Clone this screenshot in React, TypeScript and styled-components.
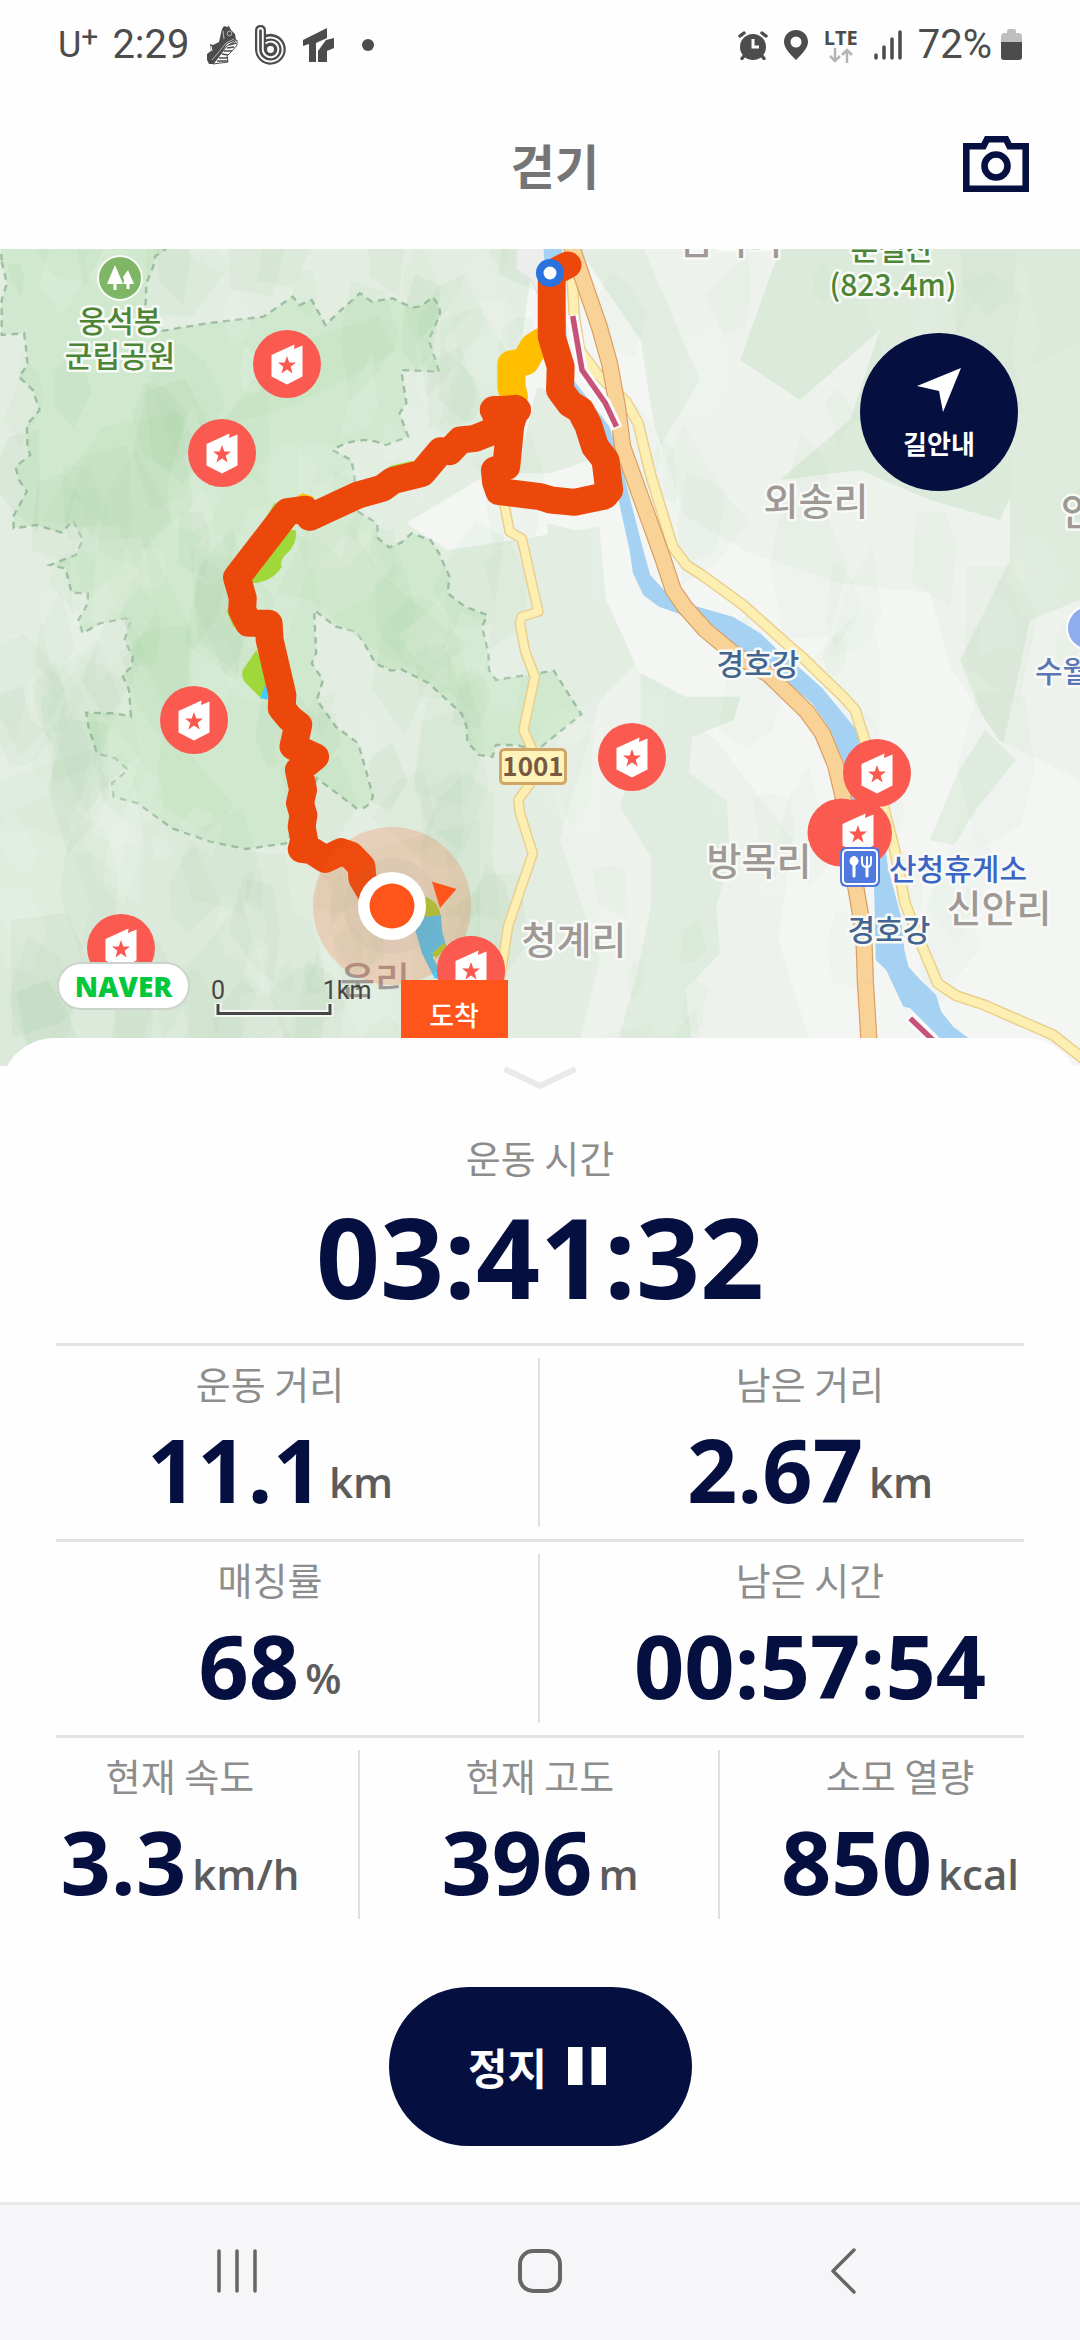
import React from "react";
import styled, { createGlobalStyle } from "styled-components";

const navy = "#051040";
const korean = `"Noto Sans CJK KR", "Noto Sans", sans-serif`;
const numeric = `"Open Sans", "Noto Sans", sans-serif`;

const GlobalStyle = createGlobalStyle`
  * { box-sizing: border-box; }
  body { margin: 0; background: #fefefe; font-family: ${korean}; }
  button { border: 0; padding: 0; background: none; color: inherit; font: inherit; cursor: pointer; }
`;

const Screen = styled.div`
  display: flex;
  flex-direction: column;
  min-height: 100vh;
  background: #fefefe;
`;

const StatusBar = styled.div`
  display: flex;
  justify-content: space-between;
  align-items: center;
  height: 90px;
  padding: 0 58px 0 58px;
  color: #4c4c4c;
  font-family: Roboto, sans-serif;
  font-size: 40px;
  line-height: 48px;
`;

const StatusGroup = styled.div<{ $gap: number }>`
  display: flex;
  align-items: center;
  gap: ${(p) => p.$gap}px;
`;

const Carrier = styled.span`
  display: flex;
  align-items: flex-start;
  font-size: 36px;
  line-height: 48px;
`;

const CarrierPlus = styled.span`
  font-size: 30px;
  line-height: 32px;
`;

const NetworkType = styled.span`
  display: flex;
  flex-direction: column;
  align-items: center;
  font-family: "Open Sans", sans-serif;
  font-size: 20px;
  font-weight: 700;
  line-height: 20px;
`;

const Header = styled.header`
  display: flex;
  align-items: center;
  height: 159px;
  padding: 0 40px 12px 140px;
`;

const Title = styled.h1`
  flex: 1;
  margin: 0;
  padding-left: 18px;
  text-align: center;
  color: #757575;
  font-size: 48px;
  font-weight: 700;
  line-height: 72px;
`;

const CameraButton = styled.button`
  display: flex;
  justify-content: center;
  width: 88px;
`;

const MapArea = styled.section`
  position: relative;
  height: 817px;
  overflow: hidden;
  background: #e6eee5;
`;

const MapCanvas = styled.svg`
  display: block;
  width: 100%;
  height: 100%;
`;

const GuideButton = styled.button`
  position: absolute;
  top: 84px;
  right: 62px;
  display: flex;
  flex-direction: column;
  align-items: center;
  gap: 10px;
  width: 158px;
  height: 158px;
  padding-top: 34px;
  border-radius: 50%;
  background: ${navy};
  color: #fff;
  font-size: 26px;
  font-weight: 700;
  line-height: 40px;
`;

const NaverBadge = styled.a`
  position: absolute;
  left: 57px;
  top: 713px;
  width: 133px;
  height: 48px;
  border: 2px solid #ccd3cc;
  border-radius: 24px;
  background: #fff;
  color: #03c73c;
  font-family: "Open Sans", sans-serif;
  font-size: 28px;
  font-weight: 800;
  line-height: 44px;
  text-align: center;
  text-decoration: none;
`;

const Panel = styled.main`
  position: relative;
  display: flex;
  flex: 1;
  flex-direction: column;
  margin-top: -28px;
  border-radius: 55px 55px 0 0;
  background: #fefefe;
`;

const Handle = styled.button`
  display: flex;
  justify-content: center;
  height: 94px;
  padding-top: 26px;
`;

const Rule = styled.hr`
  width: auto;
  height: 3px;
  margin: 0 56px;
  border: 0;
  background: #e3e3e3;
`;

const Total = styled.div`
  display: flex;
  flex-direction: column;
  align-items: center;
  gap: 18px;
  padding-bottom: 31px;
`;

const StatRow = styled.div`
  display: flex;
  padding: 12px 0;
`;

const StatCell = styled.div`
  display: flex;
  flex: 1 1 0;
  flex-direction: column;
  align-items: center;
  gap: 17px;
  padding-bottom: 14px;
  & + & { box-shadow: -2px 0 0 #e0e0e0; }
`;

const Label = styled.span`
  color: #8d8d8d;
  font-size: 38px;
  line-height: 50px;
`;

const Reading = styled.div`
  display: flex;
  align-items: flex-end;
  gap: 6px;
`;

const Value = styled.strong<{ $large?: boolean }>`
  color: ${navy};
  font-family: ${numeric};
  font-size: ${(p) => (p.$large ? 112 : 88)}px;
  font-weight: 700;
  line-height: ${(p) => (p.$large ? 112 : 88)}px;
`;

const Unit = styled.span`
  color: #5c5c5c;
  font-family: ${numeric};
  font-size: 42px;
  font-weight: 600;
  line-height: 62px;
`;

const Actions = styled.div`
  display: flex;
  justify-content: center;
  padding: 56px 0;
`;

const StopButton = styled.button`
  display: flex;
  justify-content: center;
  align-items: center;
  gap: 21px;
  width: 303px;
  height: 159px;
  padding: 0 6px 2px 0;
  border-radius: 80px;
  background: ${navy};
  color: #fff;
  font-size: 43px;
  font-weight: 700;
  line-height: 64px;
`;

const NavBar = styled.nav`
  display: flex;
  height: 138px;
  padding: 0 85px 3px;
  border-top: 3px solid #e9e9e9;
  background: #f6f6f8;
`;

const NavButton = styled.button`
  display: flex;
  flex: 1;
  justify-content: center;
  align-items: center;
`;

/* Terrain lines live on a fine survey grid that is scaled into the map's own units. */
const GRID = "translate(0 240) scale(0.34439 0.33333)";

const PARK =
  "M5 65L20 130L5 180L5 285L70 280L75 320L80 375L55 410L95 450L115 510L78 555L80 620L88 645L45 680L55 720L78 755L38 830L40 865L105 855L180 878L212 840L240 900L220 945L145 975L190 985L208 1058L255 1060L255 1090L228 1140L240 1180L290 1150L365 1135L380 1140L362 1200L385 1250L383 1280L355 1305L375 1350L380 1430L335 1420L250 1418L258 1465L282 1540L335 1555L372 1590L325 1630L330 1670L400 1690L500 1765L610 1805L715 1827L830 1810L890 1700L920 1615L985 1665L1035 1705Q1070 1710 1083 1670L1065 1600L1040 1510L975 1460L920 1380L938 1320L905 1270L918 1240L912 1110L975 1160L1035 1175L1060 1215L1090 1270L1135 1292L1165 1288L1245 1330L1340 1420L1355 1460L1357 1505L1390 1545L1430 1550L1440 1515L1500 1515L1560 1530L1688 1423L1608 1292L1440 1320L1420 1290L1418 1240L1400 1160L1415 1125L1350 1100L1300 1060L1305 1010L1275 940L1250 900L1195 880L1165 908L1130 922L1098 895L1095 850L1040 815L1028 700L1020 660L965 630Q1045 580 1120 615L1185 590L1160 520L1180 490L1165 390L1275 395L1245 300L1275 230Q1285 205 1255 170Q1220 210 1190 200L1140 175L1080 185L1045 160L980 220L945 255L905 180L870 195L850 170L765 230L600 250L475 272L420 270L425 130L445 80L450 50L490 20L490 -20L0 -20Z";

const ROUTE =
  "M1648 75L1602 100L1602 290L1628 380L1626 450L1656 492L1685 510L1708 555L1728 620L1758 660L1769 750L1755 768L1668 787L1600 780L1568 770L1450 755L1440 725L1437 690L1470 680L1482 555L1497 505L1445 510L1440 570L1380 595L1337 600L1305 635L1280 632L1225 700L1140 722L1110 745L1040 765L900 832L885 808L835 815L688 1012L705 1075L703 1110L722 1150L780 1150L783 1200L820 1365L818 1405L842 1435L866 1455L852 1520L915 1550L868 1590L880 1650L871 1690L881 1725L876 1760L883 1800L876 1828L905 1832L945 1858L990 1835L1018 1845L1050 1880L1052 1915L1080 1965";

const HIGHWAY =
  "M1650 -10L1740 260L1770 370L1793 500L1808 620L1888 850L1923 950L1955 1050L1988 1100L2048 1170L2130 1240L2233 1305L2273 1345L2343 1415L2388 1480L2426 1575L2448 1670L2460 1790L2483 1930L2508 2080L2513 2230L2523 2400L2530 2520";

const YELLOW_ROAD =
  "M1660 100L1668 230L1683 330L1733 400L1818 485L1853 550L1888 700L1953 920L1993 975L2038 1005L2158 1095L2288 1215L2330 1252L2448 1370L2483 1410L2508 1490L2568 1710L2598 1830L2628 1990L2678 2120L2723 2230L2778 2268L2858 2295L3058 2385L3150 2460";

const LOCAL_ROAD =
  "M1462 780L1480 875L1515 895L1563 1115L1515 1130L1510 1150L1525 1235L1553 1310L1520 1470L1550 1540L1540 1630L1505 1680L1510 1720L1547 1840L1475 2060L1465 2130L1445 2260L1400 2400";

const RIVER =
  "M1575 -10L1630 -10L1640 160L1650 400L1770 560L1810 700L1843 830L1868 930L1888 1005L1928 1050L2008 1095L2128 1130L2208 1180L2258 1230L2318 1280L2388 1345L2483 1465L2520 1550L2560 1730L2578 1880L2616 2030L2626 2130L2638 2180L2668 2215L2718 2265L2733 2315L2768 2360L2813 2395L2880 2480L2800 2480L2728 2393L2643 2305L2623 2300L2573 2190L2543 2160L2538 1940L2500 1800L2450 1570L2408 1465L2358 1390L2283 1325L2160 1245L2048 1170L1968 1120L1913 1100L1868 1065L1838 1000L1828 930L1798 790L1780 680L1640 480L1600 300Z";

const VALLEY =
  "M1560 -20L1650 -20L1760 150L1860 300L1900 560L1990 830L2180 940L2440 1030L2700 1060L2760 1280L2900 1500L3136 1620L3136 2500L2380 2500L2260 2100L2300 1800L2080 1500L1880 1350L1760 1080L1740 860L1300 930L1180 850L1420 700L1500 400Z";

/* Small linear generator: keeps the relief shading identical on every render. */
function reliefPatches(count: number) {
  let seed = 77;
  const rnd = () => {
    seed = (seed * 16807) % 2147483647;
    return seed / 2147483647;
  };
  return Array.from({ length: count }, () => {
    const left = rnd() < 0.7;
    const cx = left ? rnd() * 520 : 560 + rnd() * 520;
    const cy = 240 + rnd() * 830;
    const r = 16 + rnd() * 52;
    const sides = 5 + Math.floor(rnd() * 4);
    const pts = Array.from({ length: sides }, (_, i) => {
      const a = (i / sides) * Math.PI * 2;
      const k = r * (0.45 + rnd() * 0.75);
      return `${Math.round(cx + Math.cos(a) * k * 0.7)},${Math.round(cy + Math.sin(a) * k * 1.3)}`;
    }).join(" ");
    const pale = rnd() < 0.35;
    const strength = (pale ? 0.12 : 0.07) + rnd() * 0.05;
    return { pts, fill: pale ? "#ffffff" : "#8cc48c", opacity: strength * (left ? 0.8 : 0.5) };
  });
}

const patches = reliefPatches(230);

const stamps: Array<[number, number]> = [
  [287, 364], [222, 453], [194, 720], [121, 948], [471, 970], [632, 757], [877, 773], [858, 833],
];

type PlaceKind = "village" | "park" | "river" | "service" | "temple";
const placeStyle: Record<PlaceKind, { size: number; fill: string }> = {
  village: { size: 38, fill: "#9f9996" },
  park: { size: 30, fill: "#4d8537" },
  river: { size: 30, fill: "#44658f" },
  service: { size: 30, fill: "#3c66c4" },
  temple: { size: 30, fill: "#5c76b4" },
};

const places: Array<{ x: number; y: number; kind: PlaceKind; text: string; start?: boolean }> = [
  { x: 120, y: 332, kind: "park", text: "웅석봉" },
  { x: 120, y: 367, kind: "park", text: "군립공원" },
  { x: 892, y: 260, kind: "park", text: "둔철산" },
  { x: 893, y: 296, kind: "park", text: "(823.4m)" },
  { x: 730, y: 254, kind: "village", text: "심적리" },
  { x: 816, y: 515, kind: "village", text: "외송리" },
  { x: 1061, y: 525, kind: "village", text: "안봉리", start: true },
  { x: 758, y: 675, kind: "river", text: "경호강" },
  { x: 889, y: 941, kind: "river", text: "경호강" },
  { x: 1035, y: 682, kind: "temple", text: "수월암", start: true },
  { x: 759, y: 875, kind: "village", text: "방목리" },
  { x: 958, y: 880, kind: "service", text: "산청휴게소" },
  { x: 999, y: 922, kind: "village", text: "신안리" },
  { x: 574, y: 954, kind: "village", text: "청계리" },
];

function PlaceName({ x, y, kind, text, start }: (typeof places)[number]) {
  const s = placeStyle[kind];
  return (
    <text x={x} y={y} fontSize={s.size} fill={s.fill} fontWeight={500} textAnchor={start ? "start" : "middle"}
      stroke="#f8faf7" strokeWidth={5} strokeLinejoin="round" paintOrder="stroke">{text}</text>
  );
}

function Stamp({ x, y }: { x: number; y: number }) {
  return (
    <g transform={`translate(${x} ${y})`}>
      <circle r="34" fill="#fa5a4f" />
      <path d="M-15.5 -9L7.5 -19.5L7 -15L15.5 -18.5V12.5L0 20.5L-15.5 12.5Z" fill="#fff" />
      <path d="M0 -8L2.3 -1.6L9 -1.4L3.7 2.8L5.6 9.4L0 5.6L-5.6 9.4L-3.7 2.8L-9 -1.4L-2.3 -1.6Z" fill="#fa5a4f" />
    </g>
  );
}

function TrailMap() {
  return (
    <MapCanvas viewBox="0 249 1080 817" preserveAspectRatio="xMidYMid slice" fontFamily={korean} role="img" aria-label="지도">
      <rect y="240" width="1080" height="840" fill="#e3ede2" />
      <path d="M640 240H1080V1080H570L600 960L560 840L600 700L700 600L640 480L700 380Z" fill="#edf2ec" />
      <path d="M0 780L120 740L240 850L330 860L480 820L480 1080H0Z" fill="#dceadb" />
      <path d="M780 249H1080V420L1040 430L1000 520L930 500L860 470L780 480L850 420L880 330L800 400L740 360Z" fill="#dceadb" />
      <path d="M1010 380L1080 340V600L1030 620L1000 760L960 660L1010 560Z" fill="#dfebdd" />
      <g transform={GRID}>
        <path d={VALLEY} fill="#f4f6f4" />
        <path d="M1860 1300L1990 1370L2150 1370L2130 1440L2010 1490L2000 1600L2110 1680L2120 1850L2080 2000L2090 2140L1990 2250L2010 2420H1790L1850 2200L1890 2000L1890 1850L1800 1700L1860 1500Z" fill="#e0ecdf" />
        <path d="M2860 1470L2950 1560L2840 1700L2770 1815L2700 1800L2780 1600Z" fill="#e4eee3" />
        <path d="M1560 440L1680 480L1740 650L1600 700L1500 700ZM1590 850L1700 880L1640 1010L1590 1130ZM1680 1080L1700 1150L1640 1250L1600 1200Z" fill="#e3ede2" />
        <path d={PARK} fill="#d0e8cd" stroke="#9dbea2" strokeWidth="7" strokeDasharray="20 16" />
        <path d="M300 560L520 520L560 800L430 900L560 1180L520 1500L680 1700L600 1780L450 1680L480 1400L380 1200L250 860L120 840L200 700Z" fill="#c6e2c2" opacity=".5" />
        <path d="M880 300L1100 230L1150 330L1000 420L840 500L640 560L760 380Z" fill="#c6e2c2" opacity=".5" />
        <path d="M900 850L1020 850L1100 1000L1220 1100L1330 1200L1380 1420L1240 1300L1100 1240L900 1080L800 1060Z" fill="#c6e2c2" opacity=".5" />
      </g>
      {patches.map((p, i) => <polygon key={i} points={p.pts} fill={p.fill} opacity={p.opacity} />)}
      <g transform={GRID} fill="none" strokeLinejoin="round">
        <path d="M1500 20L1498 90L1540 115L1560 160L1640 180V0H1500Z" fill="#eceeee" stroke="#dfe3e1" strokeWidth="4" />
        <path d={RIVER} fill="#a5d2f2" />
        <path d={LOCAL_ROAD} stroke="#e9cd8a" strokeWidth="31" />
        <path d={LOCAL_ROAD} stroke="#fdeeb2" strokeWidth="23" />
        <path d={YELLOW_ROAD} stroke="#e9cd8a" strokeWidth="34" />
        <path d={YELLOW_ROAD} stroke="#fdeeb2" strokeWidth="26" />
        <path d={HIGHWAY} stroke="#d99f63" strokeWidth="50" />
        <path d={HIGHWAY} stroke="#f9d297" strokeWidth="43" />
        <path d="M1662 225L1690 390L1758 490L1792 565M2640 2330L2790 2480" stroke="#fafafa" strokeWidth="34" />
        <path d="M1663 228L1690 390L1758 490L1790 560M2643 2335L2780 2470" stroke="#c75277" strokeWidth="16" />
        <path d="M1580 300L1550 320L1525 365L1485 372L1485 440L1492 470" stroke="#ffbf00" strokeWidth="82" strokeLinecap="round" />
        <path d="M840 870H858Q865 905 838 935Q810 960 818 980Q790 1028 725 1030ZM745 1230L705 1290Q700 1310 710 1325L755 1372L785 1330Z" fill="#9fd83a" />
        <path d="M755 1375L772 1330L785 1380Z" fill="#45ccff" />
        <path d="M1100 715L1135 680L1200 665M660 1110L680 1160M800 790L780 825" stroke="#9fd83a" strokeWidth="6" />
        <path d="M860 775L880 764L910 775" stroke="#ffbf00" strokeWidth="8" />
        <path d="M1235 1970Q1275 1985 1280 2030L1228 2036Z" fill="#9fd83a" />
        <path d="M1225 2032L1280 2025L1285 2080L1297 2120L1256 2150L1290 2220L1262 2215L1245 2180L1225 2140L1206 2070Z" fill="#45ccff" />
        <path d="M1255 2140L1290 2108L1297 2125L1265 2155Z" fill="#9fd83a" />
        <path d={ROUTE} stroke="#ed480b" strokeWidth="81" strokeLinecap="round" />
        <path d="M1435 510H1500" stroke="#ed480b" strokeWidth="84" strokeLinecap="round" />
      </g>

      <circle cx="550" cy="273" r="14" fill="#2a72dd" />
      <circle cx="550" cy="273" r="6.5" fill="#fff" />

      <g transform="translate(120 278)">
        <circle r="22" fill="#7fb666" stroke="#f8faf7" strokeWidth="2" />
        <path d="M-5 -13L3 6H-3.500V12H-6.500V6H-13ZM8 -8L14 6H9.500V11H6.500V6H3.500L4 2L3 -1Z" fill="#fff" />
      </g>

      <rect x="500.5" y="749.5" width="65" height="34" rx="4" fill="#fff3ba" stroke="#d1a566" strokeWidth="3" />
      <text x="533" y="776" textAnchor="middle" fontSize="26" fontWeight="700" fill="#765a42">1001</text>

      <circle cx="841.5" cy="832.5" r="34" fill="#fa5a4f" />
      {stamps.map(([x, y]) => <Stamp key={`${x}-${y}`} x={x} y={y} />)}
      {places.map((p) => <PlaceName key={`${p.x}-${p.y}`} {...p} />)}

      <circle cx="1089" cy="628" r="22" fill="#8facef" stroke="#fff" strokeWidth="2" />
      <rect x="840" y="847" width="40" height="40" rx="6" fill="#4f79de" />
      <rect x="843" y="850" width="34" height="34" rx="4" fill="none" stroke="#fff" strokeWidth="2" />
      <g fill="none" stroke="#fff" strokeLinecap="round">
        <ellipse cx="854" cy="861" rx="4" ry="4.5" fill="#fff" strokeWidth="1" />
        <path d="M854 864V876M867 866V876" strokeWidth="3" />
        <path d="M862 857V862Q862 867 867 867Q871 867 871 862V857M867 857V866" strokeWidth="2" />
      </g>

      <text x="375" y="994" fontSize="38" fontWeight="500" textAnchor="middle" fill="#9f9996">운리</text>
      <circle cx="392" cy="906" r="79" fill="#ff5a1e" opacity=".2" />
      <circle cx="392" cy="906" r="48" fill="#8a8a70" opacity=".06" />
      <circle cx="392" cy="906" r="34" fill="#fff" />
      <circle cx="392" cy="906" r="22.5" fill="#ff551b" />
      <path d="M432 881.5L456.5 889L440 908Z" fill="#ff551b" />
      <Stamp x={471} y={970} />
      <rect x="401" y="980" width="107" height="62" fill="#ff551b" />
      <text x="454" y="1026" fontSize="27" fontWeight="500" textAnchor="middle" fill="#fff">도착</text>

      <g fill="none">
        <path d="M218 1003V1013.500H330V1003" stroke="#f3f7f2" strokeWidth="7" />
        <path d="M218 1004V1013.500H330V1004" stroke="#464646" strokeWidth="3" />
      </g>
      <g fontFamily="Roboto, sans-serif" fontSize="25" fill="#464646" textAnchor="middle">
        <text x="218" y="999">0</text>
        <text x="347" y="999">1km</text>
      </g>
    </MapCanvas>
  );
}

function ShoeIcon() {
  return (
    <svg width="31" height="39" viewBox="0 0 31 39" aria-hidden="true">
      <path d="M30 14L20 20L6 38L21 36L20 30L26 24L30 19Z" fill="#fefefe" stroke="#4c4c4c" strokeWidth="1" />
      <path d="M15 3L17 0L20 1L22 0L24 4L28 8L29 14L20 18L14 28L6 38L2 38L0 34V28L4 25L3 18L6 19L12 16Z" fill="#4c4c4c" />
      <path d="M22 19L29 17M20 22L27 21M17 25L25 25M15 28L21 29M12 32L21 32M10 35L21 35" stroke="#4c4c4c" strokeWidth="1.400" />
      <path d="M27 13L19 17L11 27L5 34M16 5L17 13" stroke="#d5d5d5" strokeWidth=".8" fill="none" />
      <circle cx="22.500" cy="7.500" r="2.300" fill="none" stroke="#ccc" strokeWidth=".8" />
      <path d="M4 20L5 25" stroke="#fefefe" strokeWidth="1" />
    </svg>
  );
}

function BandIcon() {
  return (
    <svg width="31" height="40" viewBox="0 0 31 40" aria-hidden="true">
      <path d="M0 24V5.500Q0 0 5.500 0Q11 0 11 5.500V9.500A15.400 15.400 0 1 1 0 24Z" fill="#4c4c4c" />
      <g fill="none" stroke="#fefefe" strokeWidth="1.900">
        <path d="M3.200 24V5.800Q3.200 3.200 5.500 3.200Q7.800 3.200 7.800 5.800V24.500A7.800 7.800 0 1 0 10.500 18.500" />
        <path d="M3.200 24A12.200 12 0 1 0 11 13.300" />
        <circle cx="15.500" cy="24.500" r="2.500" fill="#fefefe" />
      </g>
    </svg>
  );
}

function TrIcon() {
  return (
    <svg width="31" height="34" viewBox="0 0 31 34" aria-hidden="true" fill="#4c4c4c">
      <path d="M0 12L24 0V10L13 15V34H6V16L0 18Z" />
      <path d="M15 23L23 12L31 10V20L24 23V34H15Z" />
    </svg>
  );
}

function AlarmIcon() {
  return (
    <svg width="30" height="29" viewBox="0 0 30 29" aria-hidden="true">
      <circle cx="15" cy="16" r="13" fill="#4c4c4c" />
      <path d="M2 5L6 2M28 5L24 2M6 25L4 27.500M24 25L26 27.500" stroke="#4c4c4c" strokeWidth="3.400" strokeLinecap="round" />
      <path d="M15 8V16H21" fill="none" stroke="#fefefe" strokeWidth="3" />
    </svg>
  );
}

function LocationIcon() {
  return (
    <svg width="24" height="30" viewBox="0 0 24 30" aria-hidden="true">
      <path fillRule="evenodd" fill="#4c4c4c" d="M12 0C5 0 0 5 0 12C0 18 6 24 12 30C18 24 24 18 24 12C24 5 19 0 12 0ZM12 6.500A5.500 5.500 0 1 1 12 17.500A5.500 5.500 0 1 1 12 6.500Z" />
    </svg>
  );
}

function DataArrows() {
  return (
    <svg width="24" height="15" viewBox="0 0 24 15" aria-hidden="true" fill="none" stroke="#b5b5b5" strokeWidth="2.500">
      <path d="M6 0V13M1 8L6 13L11 8M18 15V2M13 7L18 2L23 7" />
    </svg>
  );
}

function SignalIcon() {
  return (
    <svg width="28" height="30" viewBox="0 0 28 30" aria-hidden="true" stroke="#4c4c4c" strokeWidth="3.500" strokeLinecap="round">
      <path d="M2 25V28M10 17V28M18 9V28M26 2V28" />
    </svg>
  );
}

function BatteryIcon() {
  return (
    <svg width="21" height="32" viewBox="0 0 21 32" aria-hidden="true">
      <path d="M6 2Q6 0 8 0H13Q15 0 15 2V4H18Q21 4 21 8V14H0V8Q0 4 3 4H6Z" fill="#bfbfbf" />
      <path d="M0 13H21V28Q21 31 18 31H3Q0 31 0 28Z" fill="#4c4c4c" />
    </svg>
  );
}

function Stat({ label, value, unit }: { label: string; value: string; unit?: string }) {
  return (
    <StatCell>
      <Label>{label}</Label>
      <Reading>
        <Value>{value}</Value>
        {unit && <Unit>{unit}</Unit>}
      </Reading>
    </StatCell>
  );
}

export default function App() {
  return (
    <Screen>
      <GlobalStyle />
      <StatusBar>
        <StatusGroup $gap={17}>
          <StatusGroup $gap={14}>
            <Carrier>U<CarrierPlus>+</CarrierPlus></Carrier>
            <span>2:29</span>
          </StatusGroup>
          <ShoeIcon />
          <BandIcon />
          <TrIcon />
          <svg width="34" height="12" viewBox="0 0 34 12" aria-hidden="true"><circle cx="17" cy="6" r="6" fill="#4c4c4c" /></svg>
        </StatusGroup>
        <StatusGroup $gap={16}>
          <AlarmIcon />
          <LocationIcon />
          <NetworkType>LTE<DataArrows /></NetworkType>
          <SignalIcon />
          <StatusGroup $gap={9}>
            <span>72%</span>
            <BatteryIcon />
          </StatusGroup>
        </StatusGroup>
      </StatusBar>

      <Header>
        <Title>걷기</Title>
        <CameraButton aria-label="카메라">
          <svg width="66" height="56" viewBox="0 0 66 56" fill="none" stroke={navy} strokeWidth="6.600">
            <path d="M3.300 10.300H20.500L24 3.300H43L46.500 10.300H62.700V52.700H3.300Z" />
            <circle cx="33" cy="30" r="11.500" />
          </svg>
        </CameraButton>
      </Header>

      <MapArea>
        <TrailMap />
        <NaverBadge href="#naver">NAVER</NaverBadge>
        <GuideButton>
          <svg width="46" height="46" viewBox="0 0 46 46" aria-hidden="true"><path d="M1 19L45 1L27 45L23 24Z" fill="#fff" /></svg>
          길안내
        </GuideButton>
      </MapArea>

      <Panel>
        <Handle aria-label="접기">
          <svg width="74" height="26" viewBox="0 0 74 26" fill="none" stroke="#e9e9e9" strokeWidth="6"><path d="M1.500 5L37 22L72.500 5" /></svg>
        </Handle>
        <Total>
          <Label>운동 시간</Label>
          <Value $large>03:41:32</Value>
        </Total>
        <Rule />
        <StatRow>
          <Stat label="운동 거리" value="11.1" unit="km" />
          <Stat label="남은 거리" value="2.67" unit="km" />
        </StatRow>
        <Rule />
        <StatRow>
          <Stat label="매칭률" value="68" unit="%" />
          <Stat label="남은 시간" value="00:57:54" />
        </StatRow>
        <Rule />
        <StatRow>
          <Stat label="현재 속도" value="3.3" unit="km/h" />
          <Stat label="현재 고도" value="396" unit="m" />
          <Stat label="소모 열량" value="850" unit="kcal" />
        </StatRow>
        <Actions>
          <StopButton>
            정지
            <svg width="38" height="38" viewBox="0 0 38 38" aria-hidden="true" fill="#fff"><path d="M0 0H14.500V38H0ZM23.500 0H38V38H23.500Z" /></svg>
          </StopButton>
        </Actions>
      </Panel>

      <NavBar>
        <NavButton aria-label="최근 앱">
          <svg width="42" height="46" viewBox="0 0 42 46" stroke="#666" strokeWidth="3.500" strokeLinecap="round"><path d="M3 3V43M21 3V43M39 3V43" /></svg>
        </NavButton>
        <NavButton aria-label="홈">
          <svg width="46" height="46" viewBox="0 0 46 46" fill="none" stroke="#666" strokeWidth="4"><rect x="3" y="3" width="40" height="40" rx="13" /></svg>
        </NavButton>
        <NavButton aria-label="뒤로">
          <svg width="26" height="46" viewBox="0 0 26 46" fill="none" stroke="#666" strokeWidth="3.500" strokeLinecap="round" strokeLinejoin="round"><path d="M24 2L3 23L24 44" /></svg>
        </NavButton>
      </NavBar>
    </Screen>
  );
}
